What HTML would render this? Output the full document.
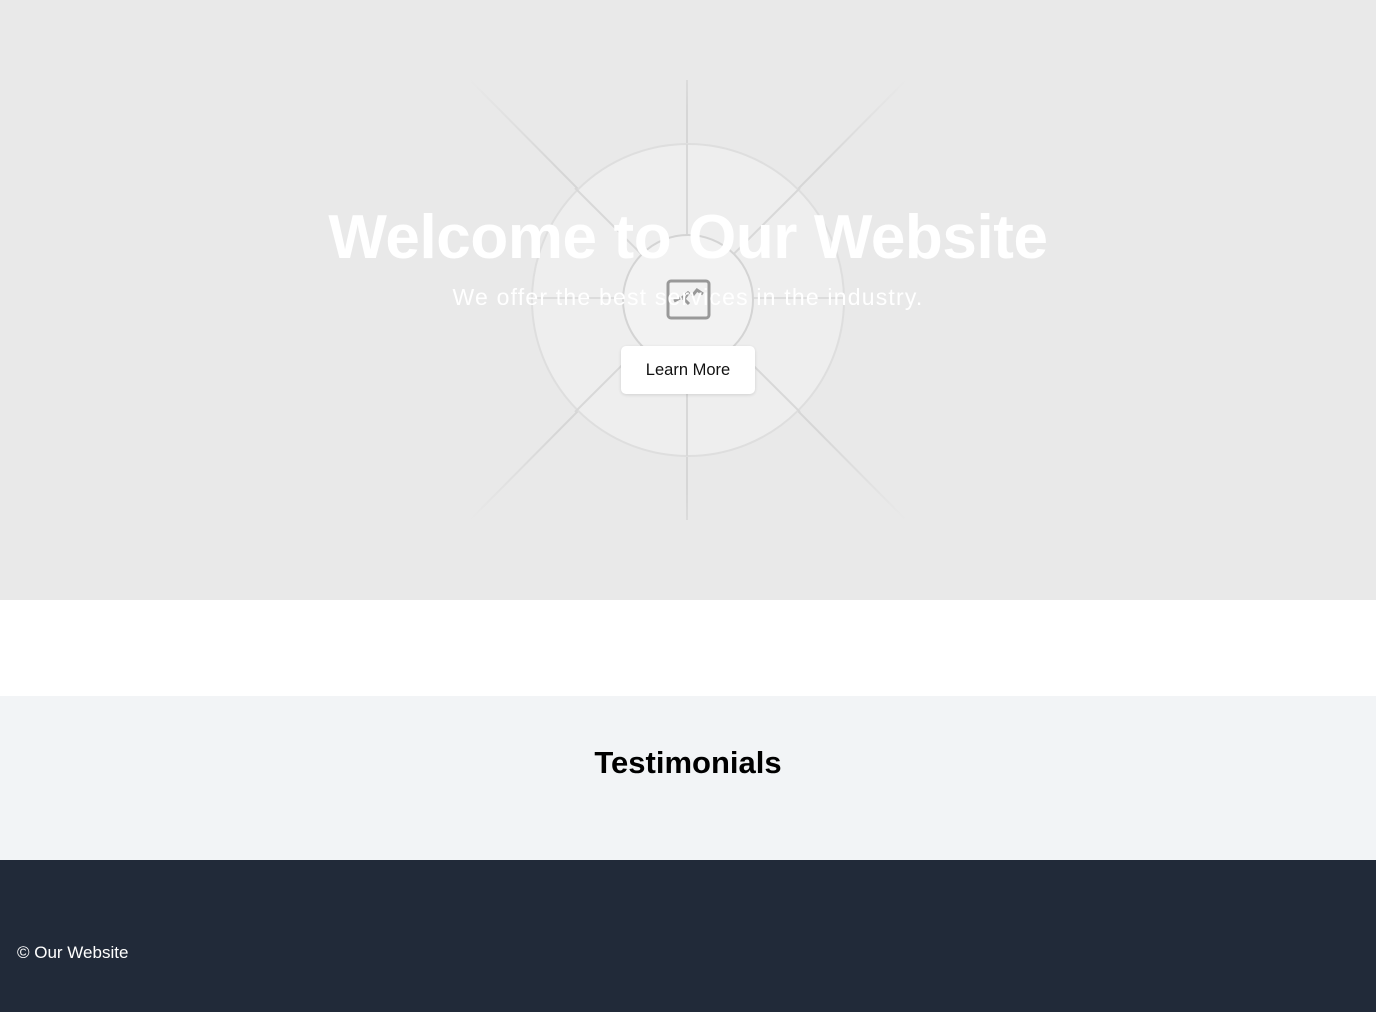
<!DOCTYPE html>
<html><head><meta charset="utf-8"><style>
body{margin:0;font-family:"Liberation Sans",sans-serif;}
.hero{position:relative;height:600px;background:#e9e9e9;overflow:hidden}
.hero svg{position:absolute;left:0;top:0}
.h1{position:absolute;left:0;right:0;top:200px;text-align:center;color:#fff;font-weight:bold;font-size:62px;letter-spacing:-0.4px;line-height:76px}
.sub{position:absolute;left:0;right:0;top:284px;text-align:center;color:#fff;font-size:23px;letter-spacing:1.2px}
.btn{position:absolute;left:621px;top:346px;width:134px;height:48px;background:#fff;border-radius:5px;box-shadow:0 1px 3px rgba(0,0,0,.12);font-size:16.5px;line-height:48px;text-align:center;color:#111}
.gap{height:96px;background:#fff}
.test{height:164px;background:#f2f4f6;text-align:center}
.test h2{margin:0;position:absolute;left:0;right:0;top:745px;font-size:31px;color:#000}
.foot{height:152px;background:#212a39;color:#fff;position:relative}
.foot span{position:absolute;left:17px;top:83px;font-size:17px}
</style></head><body>
<div class="hero">
<svg width="1376" height="600">
<defs>
<radialGradient id="f" cx="688" cy="300" r="310" gradientUnits="userSpaceOnUse">
<stop offset="0.6" stop-color="#d6d6d6"/><stop offset="1" stop-color="#e9e9e9"/>
</radialGradient>
</defs>
<g stroke="url(#f)" stroke-width="2" fill="none">
<line x1="470" y1="80" x2="906" y2="520"/>
<line x1="906" y1="80" x2="470" y2="520"/>
<line x1="687" y1="80" x2="687" y2="520"/>
</g>
<g stroke="#d8d8d8" stroke-width="2" fill="none">
<circle cx="688" cy="300" r="156" fill="#eeeeee" stroke="#dedede"/>
<line x1="575" y1="188" x2="800" y2="412"/>
<line x1="800" y1="188" x2="575" y2="412"/>
<line x1="687" y1="144" x2="687" y2="456"/>
<line x1="532" y1="298" x2="844" y2="298" stroke="#dcdcdc"/>
<circle cx="688" cy="300" r="65" fill="#f2f2f2" stroke="#d4d4d4"/>
</g>
<rect x="668" y="281" width="41" height="37" rx="3" fill="none" stroke="#999" stroke-width="3"/>
<path d="M674 301 l6 -3 M682 298 l7 -6 l-5 7 l5 5 M692 296 l5 -6 l6 4" stroke="#999" stroke-width="3" fill="none"/>
</svg>
<div class="h1">Welcome to Our Website</div>
<div class="sub">We offer the best services in the industry.</div>
<div class="btn">Learn More</div>
</div>
<div class="gap"></div>
<div class="test"><h2>Testimonials</h2></div>
<div class="foot"><span>© Our Website</span></div>
</body></html>
